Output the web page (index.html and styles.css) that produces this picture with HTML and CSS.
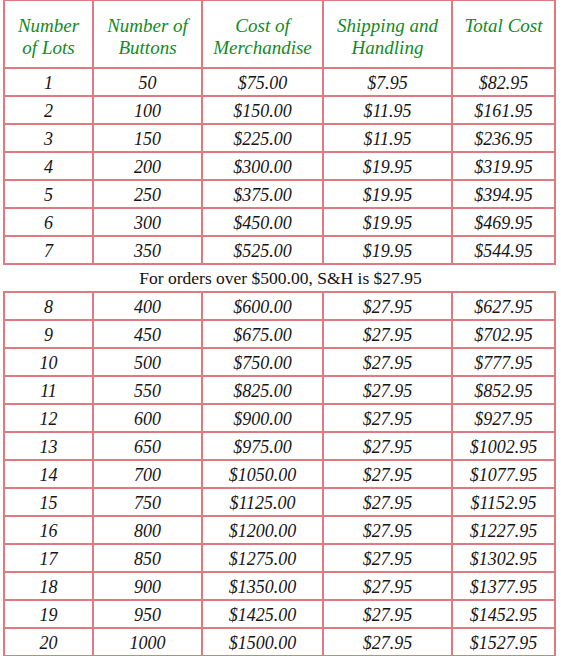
FILE: index.html
```html
<!DOCTYPE html>
<html>
<head>
<meta charset="utf-8">
<link rel="stylesheet" href="styles.css">
</head>
<body>
<div class="page">
<table class="price">
<colgroup><col class="c1"><col class="c2"><col class="c3"><col class="c4"><col class="c5"></colgroup>
<thead>
<tr class="head"><th>Number<br>of Lots</th><th>Number of<br>Buttons</th><th>Cost of<br>Merchandise</th><th>Shipping and<br>Handling</th><th>Total Cost</th></tr>
</thead>
<tbody>
<tr><td>1</td><td>50</td><td>$75.00</td><td>$7.95</td><td>$82.95</td></tr>
<tr><td>2</td><td>100</td><td>$150.00</td><td>$11.95</td><td>$161.95</td></tr>
<tr><td>3</td><td>150</td><td>$225.00</td><td>$11.95</td><td>$236.95</td></tr>
<tr><td>4</td><td>200</td><td>$300.00</td><td>$19.95</td><td>$319.95</td></tr>
<tr><td>5</td><td>250</td><td>$375.00</td><td>$19.95</td><td>$394.95</td></tr>
<tr><td>6</td><td>300</td><td>$450.00</td><td>$19.95</td><td>$469.95</td></tr>
<tr><td>7</td><td>350</td><td>$525.00</td><td>$19.95</td><td>$544.95</td></tr>
</tbody>
</table>
<p class="note">For orders over $500.00, S&amp;H is $27.95</p>
<table class="price">
<colgroup><col class="c1"><col class="c2"><col class="c3"><col class="c4"><col class="c5"></colgroup>
<tbody>
<tr><td>8</td><td>400</td><td>$600.00</td><td>$27.95</td><td>$627.95</td></tr>
<tr><td>9</td><td>450</td><td>$675.00</td><td>$27.95</td><td>$702.95</td></tr>
<tr><td>10</td><td>500</td><td>$750.00</td><td>$27.95</td><td>$777.95</td></tr>
<tr><td>11</td><td>550</td><td>$825.00</td><td>$27.95</td><td>$852.95</td></tr>
<tr><td>12</td><td>600</td><td>$900.00</td><td>$27.95</td><td>$927.95</td></tr>
<tr><td>13</td><td>650</td><td>$975.00</td><td>$27.95</td><td>$1002.95</td></tr>
<tr><td>14</td><td>700</td><td>$1050.00</td><td>$27.95</td><td>$1077.95</td></tr>
<tr><td>15</td><td>750</td><td>$1125.00</td><td>$27.95</td><td>$1152.95</td></tr>
<tr><td>16</td><td>800</td><td>$1200.00</td><td>$27.95</td><td>$1227.95</td></tr>
<tr><td>17</td><td>850</td><td>$1275.00</td><td>$27.95</td><td>$1302.95</td></tr>
<tr><td>18</td><td>900</td><td>$1350.00</td><td>$27.95</td><td>$1377.95</td></tr>
<tr><td>19</td><td>950</td><td>$1425.00</td><td>$27.95</td><td>$1452.95</td></tr>
<tr><td>20</td><td>1000</td><td>$1500.00</td><td>$27.95</td><td>$1527.95</td></tr>
</tbody>
</table>
</div>
</body>
</html>
```
FILE: styles.css
```css
html, body {
  margin: 0;
  padding: 0;
  background: #ffffff;
}
.page {
  padding: 0 3px;
  margin-top: -1px;
}
.price {
  table-layout: fixed;
  border-collapse: collapse;
  width: 553px;
}
.c1 { width: 89px; }
.c2 { width: 109px; }
.c3 { width: 121px; }
.c4 { width: 129px; }
.c5 { width: 103px; }
.price th,
.price td {
  border: 2px solid #df7b80;
  padding: 0;
  text-align: center;
}
.price th {
  height: 68px;
  vertical-align: top;
  padding-top: 14px;
  box-sizing: border-box;
  font-family: "Liberation Serif", serif;
  font-style: italic;
  font-weight: normal;
  font-size: 19px;
  line-height: 22px;
  color: #138a1e;
}
.price td {
  height: 28px;
  vertical-align: middle;
  padding-top: 2px;
  font-family: "Liberation Serif", serif;
  font-style: italic;
  font-size: 18px;
  line-height: 20px;
  color: #141414;
  box-sizing: border-box;
}
.note {
  margin: 0;
  height: 26px;
  line-height: 26px;
  text-align: center;
  font-family: "Liberation Serif", serif;
  font-size: 17.5px;
  color: #111111;
}
```
